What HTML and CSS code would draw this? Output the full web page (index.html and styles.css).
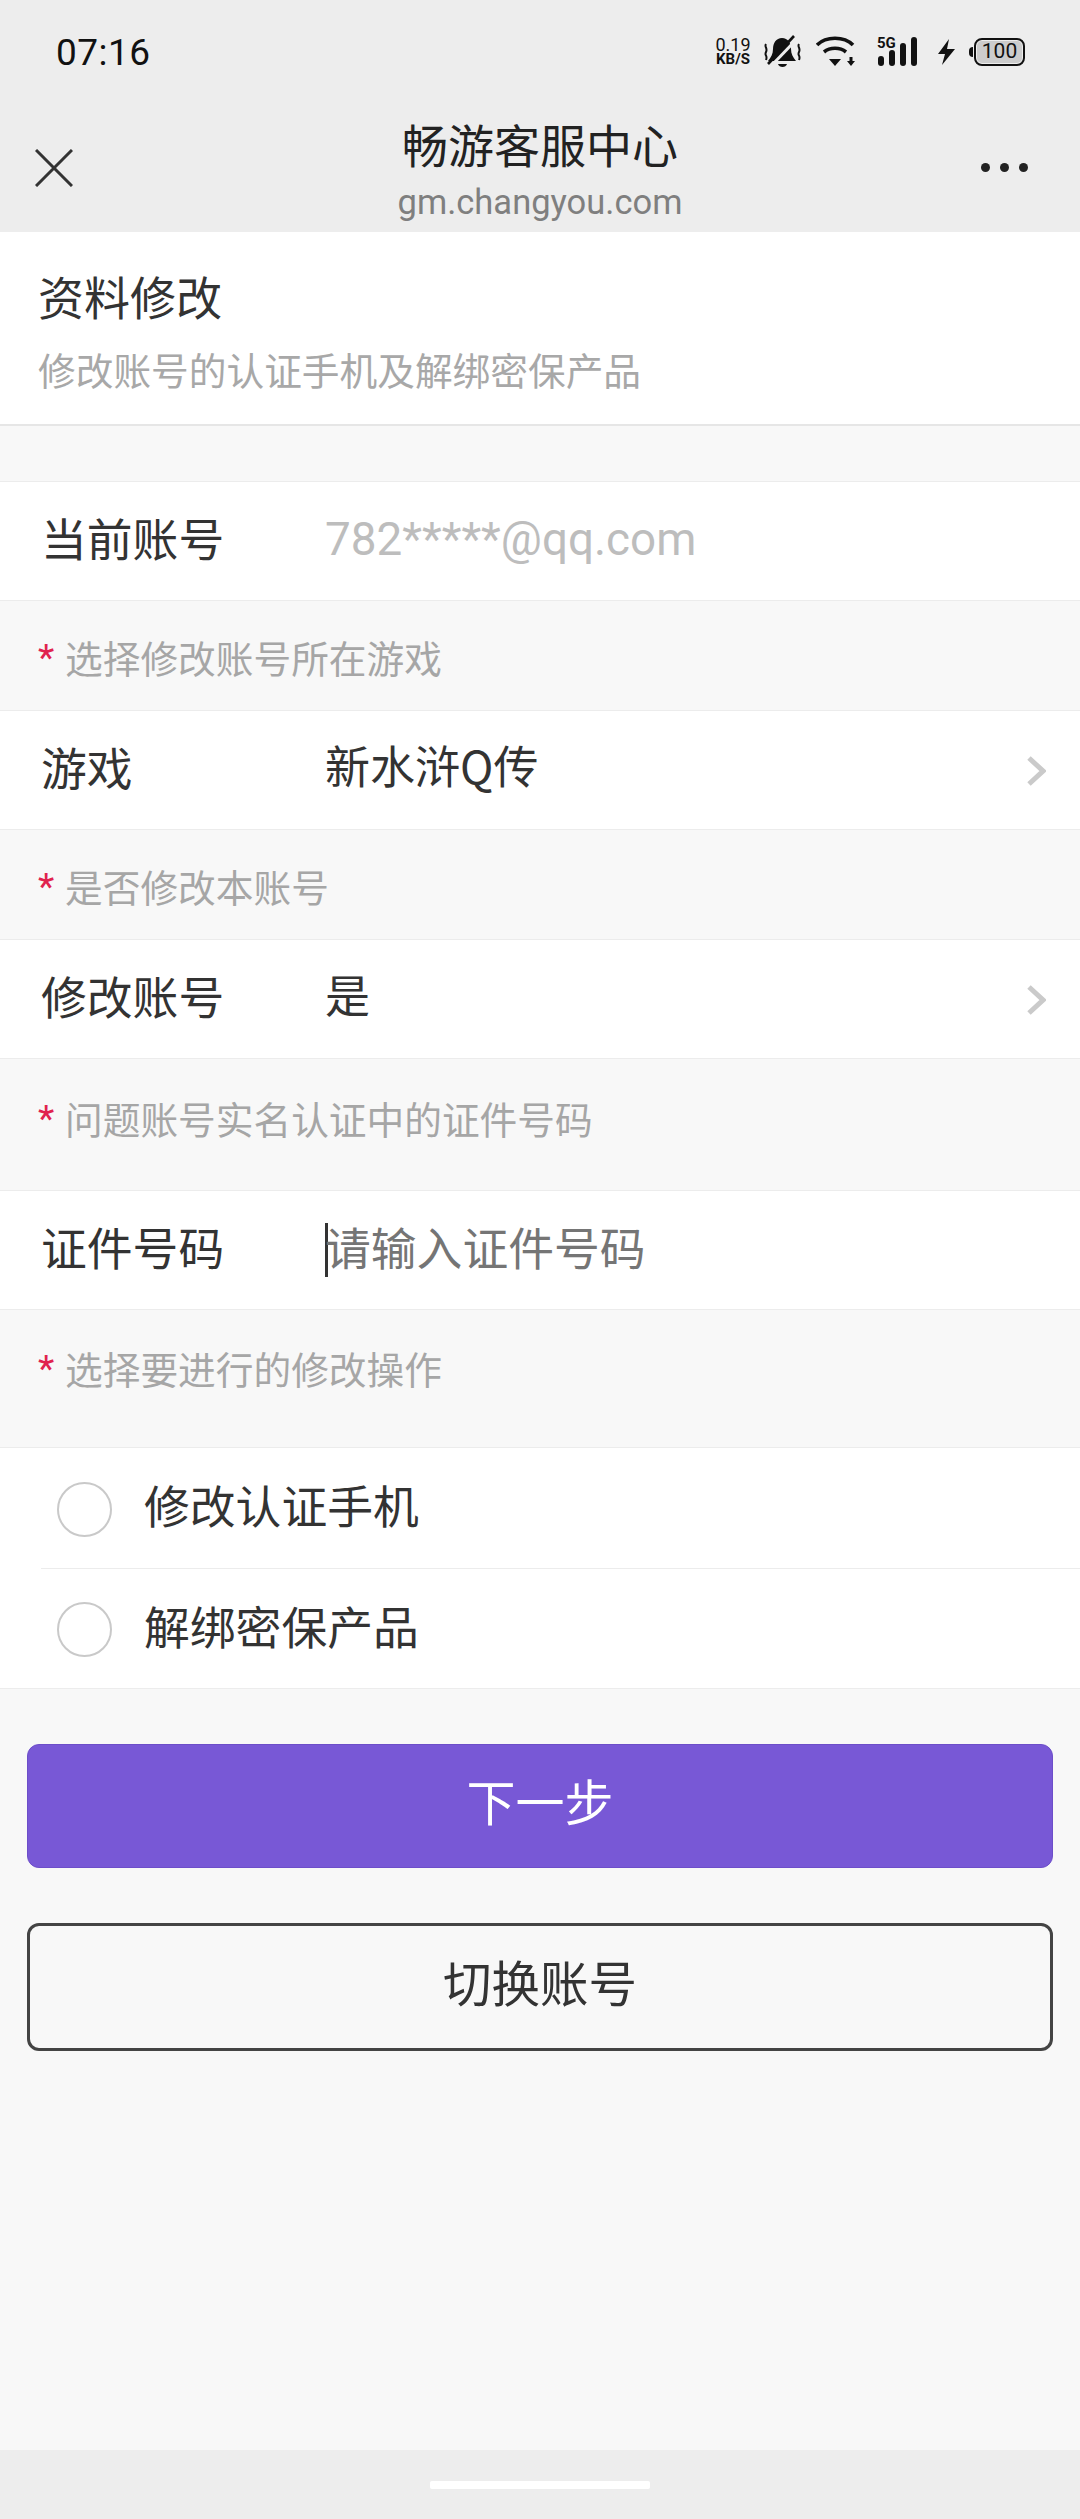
FILE: index.html
```html
<!DOCTYPE html>
<html lang="zh-CN">
<head>
<meta charset="utf-8">
<title>畅游客服中心</title>
<link rel="stylesheet" href="styles.css">
</head>
<body>
<div class="page">
  <header class="top">
    <div class="status">
      <span class="time">07:16</span>
      <div class="status-icons">
        <span class="speed"><span class="speed-n">0.19</span><span class="speed-u">KB/S</span></span>
        <svg class="ic-bell" width="38" height="34" viewBox="0 0 38 34"><path d="M18 3c-6 0-9 5-9 11 0 5-2 8-5 12h28c-3-4-5-7-5-12 0-6-3-11-9-11z" fill="#111"/><path d="M14 29h9c-1 4-8 4-9 0z" fill="#111"/><path d="M8 30L32 5" stroke="#ededed" stroke-width="3"/><path d="M4 29L30 1" stroke="#111" stroke-width="2.6"/><path d="M2 9c-2 3 2 4 0 8s2 3 0 8M35 9c-2 3 2 4 0 8s2 3 0 8" fill="none" stroke="#111" stroke-width="2"/></svg>
        <svg class="ic-wifi" width="40" height="32" viewBox="0 0 40 32"><path d="M1 9C10 0 28 0 37 9" fill="none" stroke="#111" stroke-width="3.6"/><path d="M8 16c6-5 16-5 22 0" fill="none" stroke="#111" stroke-width="3.6"/><path d="M13 23h12l-6 7z" fill="#111"/><path d="M31 25h8l-4 5zM33.500 21h3v5h-3z" fill="#111"/></svg>
        <svg class="ic-signal" width="42" height="38" viewBox="0 -4 42 38"><text class="net" x="0" y="11">5G</text><rect x="1" y="19" width="6" height="10" rx="3" fill="#111"/><rect x="12" y="13" width="6" height="16" rx="3" fill="#111"/><rect x="23" y="6" width="6" height="23" rx="3" fill="#111"/><rect x="34" y="0" width="6" height="29" rx="3" fill="#111"/></svg>
        <svg class="ic-bolt" width="20" height="28" viewBox="0 0 20 28"><path d="M12 1L1 16h7l-3 11 13-16h-8z" fill="#111"/></svg>
        <span class="battery-tip"></span>
        <span class="battery">100</span>
      </div>
    </div>
    <div class="nav">
      <svg class="ic-close" width="38" height="38" viewBox="0 0 38 38"><path d="M1 1L37 37M37 1L1 37" stroke="#333" stroke-width="3" fill="none"/></svg>
      <div class="nav-title">
        <div class="nav-name">畅游客服中心</div>
        <div class="nav-url">gm.changyou.com</div>
      </div>
      <div class="more"><i></i><i></i><i></i></div>
    </div>
  </header>

  <section class="intro">
    <h1 class="intro-title">资料修改</h1>
    <p class="intro-sub">修改账号的认证手机及解绑密保产品</p>
  </section>

  <main class="form">
    <div class="row row-first"><span class="row-label">当前账号</span><span class="row-text account">782*****@qq.com</span></div>
    <div class="hint hint-a"><span class="star">*</span>选择修改账号所在游戏</div>
    <div class="row"><span class="row-label">游戏</span><span class="row-value">新水浒Q传</span><svg class="chev" width="20" height="32" viewBox="0 0 20 32"><path d="M3 3l14 13L3 29" fill="none" stroke="#cacaca" stroke-width="5"/></svg></div>
    <div class="hint hint-a"><span class="star">*</span>是否修改本账号</div>
    <div class="row"><span class="row-label">修改账号</span><span class="row-value">是</span><svg class="chev" width="20" height="32" viewBox="0 0 20 32"><path d="M3 3l14 13L3 29" fill="none" stroke="#cacaca" stroke-width="5"/></svg></div>
    <div class="hint hint-b"><span class="star">*</span>问题账号实名认证中的证件号码</div>
    <div class="row"><span class="row-label">证件号码</span><span class="caret"></span><span class="row-text placeholder">请输入证件号码</span></div>
    <div class="hint hint-c"><span class="star">*</span>选择要进行的修改操作</div>
    <div class="radios">
      <div class="radio-row radio-sep"><span class="radio"></span><span class="radio-text">修改认证手机</span></div>
      <div class="radio-row"><span class="radio"></span><span class="radio-text">解绑密保产品</span></div>
    </div>
  </main>

  <div class="actions">
    <button class="btn btn-primary">下一步</button>
    <button class="btn btn-outline">切换账号</button>
  </div>

  <footer class="home"><span class="home-bar"></span></footer>
</div>
</body>
</html>
```
FILE: styles.css
```css
* { box-sizing: border-box; }
html, body { margin: 0; padding: 0; }
body {
  width: 1080px;
  height: 2519px;
  background: #f8f8f8;
  font-family: "Noto Sans CJK SC", "Roboto", sans-serif;
  overflow: hidden;
}
.page { display: flex; flex-direction: column; height: 2519px; }

.top { height: 232px; background: #ededed; flex: none; }
.status { height: 100px; display: flex; align-items: center; justify-content: space-between; padding: 4px 55px 0 56px; }
.time { font-family: "Roboto", sans-serif; font-size: 37px; color: #111; letter-spacing: 0.5px; }
.status-icons { display: flex; align-items: center; }
.speed { display: flex; flex-direction: column; align-items: center; width: 42px; font-family: "Roboto", sans-serif; color: #111; line-height: 15px; margin-right: 10px; }
.speed-n { font-size: 18px; }
.speed-u { font-size: 15px; font-weight: 700; }
.ic-bell { margin-right: 14px; }
.ic-wifi { margin-right: 21px; }
.ic-signal { margin-right: 18px; }
.ic-bolt { margin-right: 12px; }
.net { font-family: "Roboto", sans-serif; font-size: 15px; font-weight: 700; fill: #111; }
.battery-tip { width: 4px; height: 10px; background: #111; border-radius: 4px 0 0 4px; margin-right: 1px; }
.battery { width: 51px; height: 28px; border: 2.5px solid #111; border-radius: 8px; background: #ccc; background-clip: content-box; padding: 1px; font-family: "Roboto", sans-serif; font-size: 21px; line-height: 21px; text-align: center; color: #111; overflow: hidden; }

.nav { position: relative; height: 132px; display: flex; justify-content: space-between; padding: 49px 52px 0 35px; }
.ic-close { flex: none; }
.nav-title { position: absolute; left: 0; right: 0; top: 13px; text-align: center; }
.nav-name { font-size: 46px; line-height: 60px; color: #222; }
.nav-url { font-family: "Roboto", sans-serif; font-size: 34.5px; line-height: 50px; color: #7f7f7f; margin-top: 4px; }
.more { display: flex; gap: 10px; padding-top: 14px; }
.more i { width: 9px; height: 9px; border-radius: 50%; background: #222; }

.intro { height: 194px; background: #fff; border-bottom: 2px solid #e6e6e6; padding: 30px 38px 0; flex: none; }
.intro-title { margin: 0; font-size: 46px; font-weight: 400; line-height: 66px; color: #333; }
.intro-sub { margin: 13px 0 0; font-size: 37.7px; line-height: 56px; color: #a8a8a8; }

.form { margin-top: 55px; flex: none; }
.row { height: 120px; background: #fff; border-top: 1px solid #ececec; border-bottom: 1px solid #ececec; display: flex; align-items: center; padding: 0 0 9px 41px; position: relative; }
.row-label { width: 284px; font-size: 45.8px; color: #333; flex: none; }
.row-text { font-size: 45.8px; }
.row-value { font-size: 45px; color: #333; margin-top: -2px; }
.account { font-family: "Roboto", sans-serif; color: #bdbdbd; margin-top: 5px; }
.placeholder { color: #757575; }
.caret { width: 3px; height: 54px; background: #333; flex: none; margin: 9px -3px 0 0; }
.chev { position: absolute; right: 34px; top: 44px; }

.hint { color: #a6a6a6; font-size: 37.7px; padding-left: 38px; line-height: 58px; display: flex; align-items: flex-start; }
.hint-a { height: 109px; padding-top: 27px; }
.hint-b { height: 131px; padding-top: 30px; }
.hint-c { height: 137px; padding-top: 29px; }
.star { color: #e0234e; width: 27px; font-family: "Roboto", sans-serif; flex: none; }

.radios { background: #fff; border-top: 1px solid #ececec; border-bottom: 1px solid #ececec; }
.radio-row { height: 119px; display: flex; align-items: center; margin-left: 41px; padding: 2px 0 0 16px; }
.radio-sep { height: 121px; border-bottom: 1px solid #ececec; }
.radio { width: 55px; height: 55px; border: 2px solid #c9c9c9; border-radius: 50%; flex: none; margin-right: 32px; }
.radio-text { font-size: 45.8px; color: #333; margin-top: -10px; }

.actions { padding: 55px 27px 0; display: flex; flex-direction: column; gap: 55px; flex: 1; }
.btn { width: 100%; font-family: inherit; border-radius: 12px; padding: 0 0 13px; }
.btn-primary { height: 124px; background: #7858d6; border: 1px solid #6d4ec9; color: #fff; font-size: 49px; }
.btn-outline { height: 128px; background: transparent; border: 3px solid #444; color: #333; font-size: 48.5px; }

.home { height: 69px; background: #ededed; flex: none; display: flex; justify-content: center; padding-top: 31px; }
.home-bar { width: 220px; height: 8px; background: #fff; border-radius: 2px; }
```
